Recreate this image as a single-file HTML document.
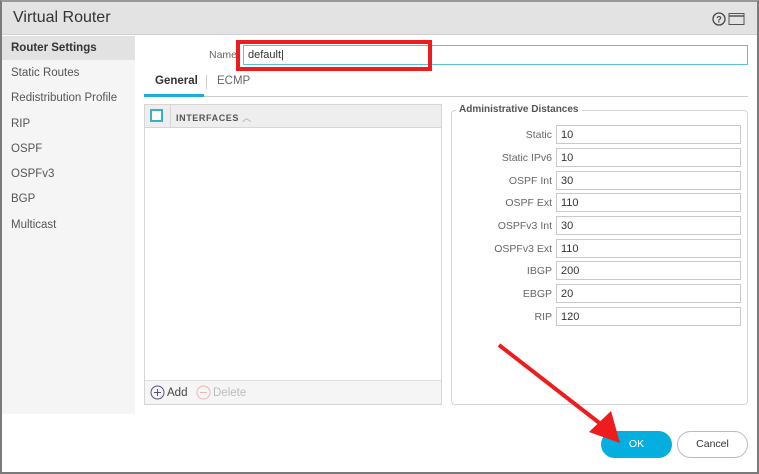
<!DOCTYPE html>
<html><head><style>
*{box-sizing:border-box;margin:0;padding:0}
body{width:759px;height:474px;overflow:hidden;background:#fff;font-family:"Liberation Sans",sans-serif;position:relative;color:#333}
.abs{position:absolute}
.frame{left:0;top:0;width:759px;height:474px;border:2px solid #7a7a7a;border-top-color:#999}
.title{left:2px;top:2px;width:755px;height:33px;background:#e3e3e3;border-bottom:1px solid #d0d0d0}
.title span{position:absolute;left:11px;top:7px;font-size:16px;color:#333}
.side{left:2px;top:36px;width:133px;height:378px;background:#f5f5f5}
.si{position:absolute;left:11px;font-size:11.5px;color:#555}
.sel{left:2px;top:36px;width:133px;height:24px;background:#e2e2e2}
.lbl{font-size:10.5px;color:#666;text-align:right}
.inp{border:1px solid #c9c9c9;background:#fff;font-size:11px;padding:3px 4px 1px;color:#333}
</style></head><body>
<div class="abs frame"></div>
<div class="abs title"><span>Virtual Router</span>
<svg class="abs" style="left:710px;top:10px" width="38" height="14"><circle cx="7" cy="7" r="6" fill="none" stroke="#444" stroke-width="1.3"/><text x="7" y="10.5" font-size="9" text-anchor="middle" font-family="Liberation Sans" font-weight="bold" fill="#444">?</text><rect x="17" y="1.5" width="15" height="11" fill="none" stroke="#555"/><line x1="17" y1="4" x2="32" y2="4" stroke="#555" stroke-width="1.5"/></svg>
</div>
<div class="abs side"></div>
<div class="abs sel"></div>
<div class="si" style="top:42px;font-weight:bold;color:#333">Router Settings</div>
<div class="si" style="top:67px">Static Routes</div>
<div class="si" style="top:92px">Redistribution Profile</div>
<div class="si" style="top:118px">RIP</div>
<div class="si" style="top:143px">OSPF</div>
<div class="si" style="top:168px">OSPFv3</div>
<div class="si" style="top:193px">BGP</div>
<div class="si" style="top:219px">Multicast</div>

<div class="abs lbl" style="left:190px;top:49px;width:47px">Name</div>
<div class="abs inp" style="left:243px;top:45px;width:505px;height:20px;border-color:#5bc0d8">default|</div>
<div class="abs" style="left:236px;top:40px;width:196px;height:31px;border:4px solid #ee1c1c"></div>

<div class="abs" style="left:155px;top:75px;font-size:11.5px;font-weight:bold;color:#333">General</div>
<div class="abs" style="left:206px;top:75px;width:1px;height:14px;background:#ccc"></div>
<div class="abs" style="left:217px;top:75px;font-size:11.5px;color:#666">ECMP</div>
<div class="abs" style="left:144px;top:96px;width:604px;height:1px;background:#ccc"></div>
<div class="abs" style="left:144px;top:94px;width:60px;height:3px;background:#1eadd6"></div>

<div class="abs" style="left:144px;top:104px;width:298px;height:301px;border:1px solid #d6d6d6"></div>
<div class="abs" style="left:145px;top:105px;width:296px;height:23px;background:#eeeeee;border-bottom:1px solid #d6d6d6"></div>
<div class="abs" style="left:150px;top:109px;width:13px;height:13px;border:2px solid #3aafc9;background:#fff"></div>
<div class="abs" style="left:170px;top:105px;width:1px;height:23px;background:#d6d6d6"></div>
<div class="abs" style="left:176px;top:111px;font-size:9px;font-weight:bold;color:#555;letter-spacing:0.6px">INTERFACES <span style="color:#bbb">︿</span></div>
<div class="abs" style="left:145px;top:380px;width:296px;height:24px;background:#f5f5f5;border-top:1px solid #ddd"></div>
<svg class="abs" style="left:150px;top:385px" width="15" height="15"><circle cx="7.5" cy="7.5" r="6.5" fill="none" stroke="#557" stroke-width="1"/><path d="M7.5 4v7M4 7.5h7" stroke="#557"/></svg>
<div class="abs" style="left:167px;top:387px;font-size:11.5px;color:#444">Add</div>
<svg class="abs" style="left:196px;top:385px" width="15" height="15"><circle cx="7.5" cy="7.5" r="6.5" fill="none" stroke="#e8b8b8" stroke-width="1"/><path d="M4 7.5h7" stroke="#e8b8b8"/></svg>
<div class="abs" style="left:213px;top:387px;font-size:11.5px;color:#bbb">Delete</div>

<div class="abs" style="left:451px;top:110px;width:297px;height:295px;border:1px solid #d6d6d6;border-radius:4px"></div>
<div class="abs" style="left:456px;top:104px;padding:0 3px;background:#fff;font-size:10px;font-weight:bold;color:#555">Administrative Distances</div>

<div class="abs lbl" style="left:460px;top:129px;width:92px">Static</div><div class="abs inp" style="left:556px;top:125px;width:185px;height:19px">10</div>
<div class="abs lbl" style="left:460px;top:152px;width:92px">Static IPv6</div><div class="abs inp" style="left:556px;top:148px;width:185px;height:19px">10</div>
<div class="abs lbl" style="left:460px;top:175px;width:92px">OSPF Int</div><div class="abs inp" style="left:556px;top:171px;width:185px;height:19px">30</div>
<div class="abs lbl" style="left:460px;top:197px;width:92px">OSPF Ext</div><div class="abs inp" style="left:556px;top:193px;width:185px;height:19px">110</div>
<div class="abs lbl" style="left:460px;top:220px;width:92px">OSPFv3 Int</div><div class="abs inp" style="left:556px;top:216px;width:185px;height:19px">30</div>
<div class="abs lbl" style="left:460px;top:243px;width:92px">OSPFv3 Ext</div><div class="abs inp" style="left:556px;top:239px;width:185px;height:19px">110</div>
<div class="abs lbl" style="left:460px;top:265px;width:92px">IBGP</div><div class="abs inp" style="left:556px;top:261px;width:185px;height:19px">200</div>
<div class="abs lbl" style="left:460px;top:288px;width:92px">EBGP</div><div class="abs inp" style="left:556px;top:284px;width:185px;height:19px">20</div>
<div class="abs lbl" style="left:460px;top:311px;width:92px">RIP</div><div class="abs inp" style="left:556px;top:307px;width:185px;height:19px">120</div>

<div class="abs" style="left:601px;top:431px;width:71px;height:27px;border-radius:14px;background:#04afe0;color:#fff;font-size:10.5px;text-align:center;line-height:27px">OK</div>
<div class="abs" style="left:677px;top:431px;width:71px;height:27px;border-radius:14px;background:#fff;border:1px solid #bbb;color:#333;font-size:10.5px;text-align:center;line-height:25px">Cancel</div>

<svg class="abs" style="left:0;top:0" width="759" height="474"><line x1="499" y1="345" x2="602" y2="425" stroke="#ee1c1c" stroke-width="4"/><polygon points="620,443 589,432 611,411" fill="#ee1c1c"/></svg>
</body></html>
